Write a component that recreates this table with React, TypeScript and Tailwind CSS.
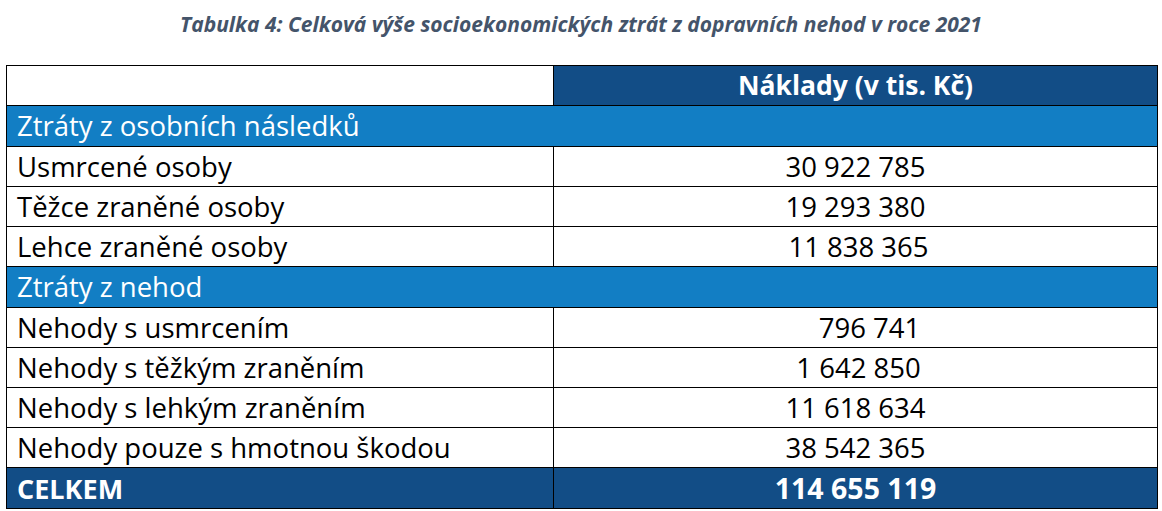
import React from "react";

type Row =
  | { kind: "section"; label: string }
  | { kind: "item"; label: string; value: string; shift?: string };

const rows: Row[] = [
  { kind: "section", label: "Ztráty z osobních následků" },
  { kind: "item", label: "Usmrcené osoby", value: "30 922 785" },
  { kind: "item", label: "Těžce zraněné osoby", value: "19 293 380" },
  { kind: "item", label: "Lehce zraněné osoby", value: "11 838 365", shift: "pl-[6px]" },
  { kind: "section", label: "Ztráty z nehod" },
  { kind: "item", label: "Nehody s usmrcením", value: "796 741", shift: "pl-[28px]" },
  { kind: "item", label: "Nehody s těžkým zraněním", value: "1 642 850", shift: "pl-[6px]" },
  { kind: "item", label: "Nehody s lehkým zraněním", value: "11 618 634" },
  { kind: "item", label: "Nehody pouze s hmotnou škodou", value: "38 542 365" },
];

const font = { fontFamily: "'Open Sans', 'Noto Sans', sans-serif" };

export default function App() {
  return (
    <div className="w-[1162px] h-[511px] bg-white overflow-hidden" style={font}>
      <h1 className="h-[50px] pt-[10px] text-center text-[21px] font-bold italic leading-[28px] text-[#44546a]">
        Tabulka 4: Celková výše socioekonomických ztrát z dopravních nehod v roce 2021
      </h1>
      <div className="mt-[15px] ml-[6px] w-[1152px] border border-black text-[27.5px] leading-none">
        {/* header */}
        <div className="grid grid-cols-[547px_1fr] h-[40px] border-b border-black">
          <div className="border-r border-black bg-white" />
          <div className="flex items-center justify-center bg-[#124d86] text-[26.5px] font-bold text-white">
            Náklady (v tis. Kč)
          </div>
        </div>

        {rows.map((row) =>
          row.kind === "section" ? (
            <div
              key={row.label}
              className="flex h-[41px] items-center border-b border-black bg-[#127ec4] pl-[10px] text-white"
            >
              {row.label}
            </div>
          ) : (
            <div key={row.label} className="grid grid-cols-[547px_1fr] h-[40px] border-b border-black text-black">
              <div className="flex items-center border-r border-black pl-[10px]">{row.label}</div>
              <div className={`flex items-center justify-center ${row.shift ?? ""}`}>{row.value}</div>
            </div>
          )
        )}

        {/* total */}
        <div className="grid grid-cols-[547px_1fr] h-[40px] bg-[#124d86] font-bold text-white">
          <div className="flex items-center border-r border-black pl-[10px] text-[27px]">CELKEM</div>
          <div className="flex items-center justify-center text-[28.5px]">114 655 119</div>
        </div>
      </div>
    </div>
  );
}
